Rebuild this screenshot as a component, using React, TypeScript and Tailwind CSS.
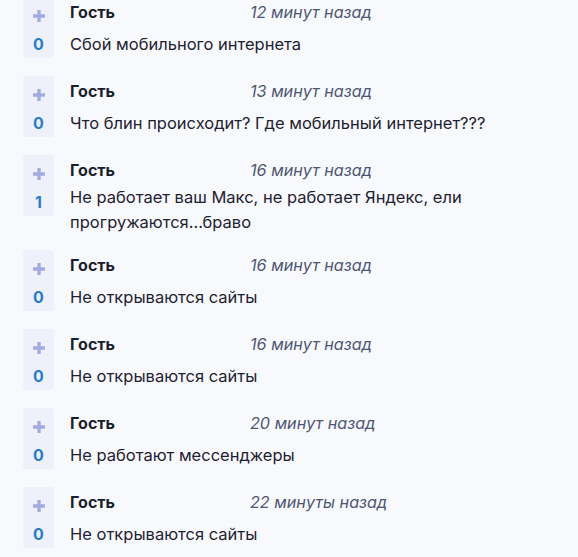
const comments = [
  { time: '12 минут назад', text: 'Сбой мобильного интернета', votes: 0 },
  { time: '13 минут назад', text: 'Что блин происходит? Где мобильный интернет???', votes: 0 },
  { time: '16 минут назад', text: 'Не работает ваш Макс, не работает Яндекс, ели прогружаются…браво', votes: 1 },
  { time: '16 минут назад', text: 'Не открываются сайты', votes: 0 },
  { time: '16 минут назад', text: 'Не открываются сайты', votes: 0 },
  { time: '20 минут назад', text: 'Не работают мессенджеры', votes: 0 },
  { time: '22 минуты назад', text: 'Не открываются сайты', votes: 0 },
];

const PlusIcon = () => (
  <svg width="12" height="12" viewBox="0 0 12 12" className="text-[#a2ace0]">
    <path d="M6 0v12M0 6h12" stroke="currentColor" strokeWidth="3.4" />
  </svg>
);

export default function App() {
  return (
    <div
      className="min-h-[557px] w-full overflow-hidden bg-[#f8f9fc] text-[16px]"
      style={{ fontFamily: 'Inter, "Noto Sans", sans-serif' }}
    >
      <div className="-mt-[3px] pl-[23px] pr-4">
        {comments.map((c, i) => (
          <div key={i} className="mb-[15px] flex items-start gap-[16px]">
            <div className="flex h-[61px] w-[31px] shrink-0 flex-col items-center rounded-[3px] bg-[#eef1f9] pt-[13px]">
              <PlusIcon />
              <span className="mt-[12px] text-[16px] font-bold leading-5 text-[#2b7dc3]">{c.votes}</span>
            </div>
            <div className="flex-1">
              <div className="flex h-[30px] items-center">
                <span className="w-[180px] font-bold text-[#1b1e2c]">Гость</span>
                <span className="text-[16.2px] italic text-[#4d5674]">{c.time}</span>
              </div>
              <div className="flex min-h-[34px] items-center text-[16.5px] leading-[25px] text-[#1e2132]">
                <p>{c.text}</p>
              </div>
            </div>
          </div>
        ))}
      </div>
    </div>
  );
}
